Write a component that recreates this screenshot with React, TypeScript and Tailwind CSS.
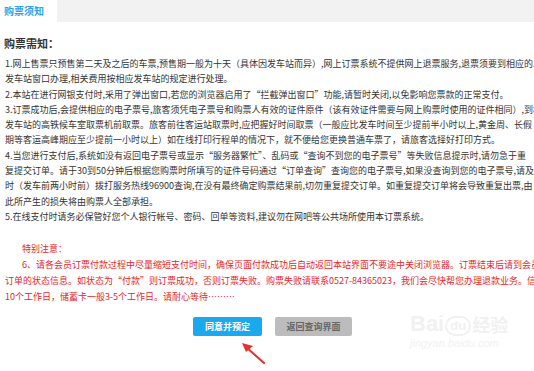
const notice = [
  "1.网上售票只预售第二天及之后的车票,预售期一般为十天（具体因发车站而异）,网上订票系统不提供网上退票服务,退票须要到相应的发车站",
  "发车站窗口办理,相关费用按相应发车站的规定进行处理。",
  "2.本站在进行网银支付时,采用了弹出窗口,若您的浏览器启用了“拦截弹出窗口”功能,请暂时关闭,以免影响您票款的正常支付。",
  "3.订票成功后,会提供相应的电子票号,旅客须凭电子票号和购票人有效的证件原件（该有效证件需要与网上购票时使用的证件相同）,到相应",
  "发车站的高铁候车室取票机前取票。旅客前往客运站取票时,应把握好时间取票（一般应比发车时间至少提前半小时以上,黄金周、长假",
  "期等客运高峰期应至少提前一小时以上）如在线打印行程单的情况下，就不便给您更换普通车票了，请旅客选择好打印方式。",
  "4.当您进行支付后,系统如没有返回电子票号或显示“服务器繁忙”、乱码或“查询不到您的电子票号”等失败信息提示时,请勿急于重",
  "复提交订单。请于30到50分钟后根据您购票时所填写的证件号码通过“订单查询”查询您的电子票号,如果没查询到您的电子票号,请及",
  "时（发车前两小时前）拨打服务热线96900查询,在没有最终确定购票结果前,切勿重复提交订单。如重复提交订单将会导致重复出票,由",
  "此所产生的损失将由购票人全部承担。",
  "5.在线支付时请务必保管好您个人银行帐号、密码、回单等资料,建议勿在网吧等公共场所使用本订票系统。",
];

const warning = [
  "订单的状态信息。如状态为“付款”则订票成功，否则订票失败。购票失败请联系0527-84365023，我们会尽快帮您办理退款业务。信用卡一般",
  "10个工作日，储蓄卡一般3-5个工作日。请耐心等待………",
];

export default function App() {
  return (
    <div className="relative h-[371px] w-[534px] overflow-hidden bg-white font-['Microsoft_YaHei','Noto_Sans_CJK_SC',sans-serif]">
      <div className="flex h-[22px]">
        <div className="w-[57px] bg-white pl-[4px] text-[10px] leading-[22px] font-bold text-[#2aa5e8]">
          购票须知
        </div>
        <div className="flex-1 bg-[#f2f2f2]" />
      </div>

      <div className="w-[545px]">
        <h2 className="mt-[13px] pl-[4px] text-[11px] leading-[16px] font-bold text-[#333]">
          购票需知：
        </h2>

        <div className="mt-[5px] pl-[5px] text-[9px] leading-[15.3px] text-[#333]">
          {notice.map((line, i) => (
            <div key={i} className="whitespace-nowrap">
              {line}
            </div>
          ))}
        </div>

        <div className="mt-[17px] text-[9px] leading-[16px] text-[#e8262b]">
          <div className="whitespace-nowrap pl-[22px]">特别注意：</div>
          <div className="whitespace-nowrap pl-[22px]">
            6、请各会员订票付款过程中尽量缩短支付时间，确保页面付款成功后自动返回本站界面不要途中关闭浏览器。订票结束后请到会员中心查看
          </div>
          {warning.map((line, i) => (
            <div key={i} className="whitespace-nowrap pl-[5px]">
              {line}
            </div>
          ))}
        </div>

        <div className="mt-[12px] flex justify-center gap-[13px]">
          <button className="h-[19px] w-[69px] rounded-[2px] bg-[#1ba9ee] text-[9px] font-bold text-white">
            同意并预定
          </button>
          <button className="h-[19px] w-[77px] rounded-[2px] bg-[#bcbcbc] text-[9px] font-bold text-[#666]">
            返回查询界面
          </button>
        </div>
      </div>

      {/* red arrow pointing at the confirm button */}
      <svg className="absolute left-[236px] top-[337px]" width="34" height="30" viewBox="0 0 34 30">
        <line x1="28" y1="26" x2="10" y2="10" stroke="#e8302c" strokeWidth="2.2" strokeLinecap="round" />
        <polygon points="6,6 17,9 10,15" fill="#e8302c" />
      </svg>

      {/* watermark */}
      <div className="pointer-events-none absolute left-[410px] top-[312px] flex flex-col items-start text-[#f1f1f1]">
        <div className="flex items-end font-['Liberation_Sans',sans-serif] text-[22px] leading-[24px] font-bold">
          <span>Bai</span>
          <span className="mx-[1px] rounded-full border-2 border-[#f1f1f1] px-[3px] text-[13px] leading-[16px]">du</span>
          <span className="font-['Noto_Sans_CJK_SC',sans-serif] text-[18px]">经验</span>
        </div>
        <div className="font-['Liberation_Sans',sans-serif] text-[11px] leading-[14px] italic">
          jingyan.baidu.com
        </div>
      </div>
    </div>
  );
}
